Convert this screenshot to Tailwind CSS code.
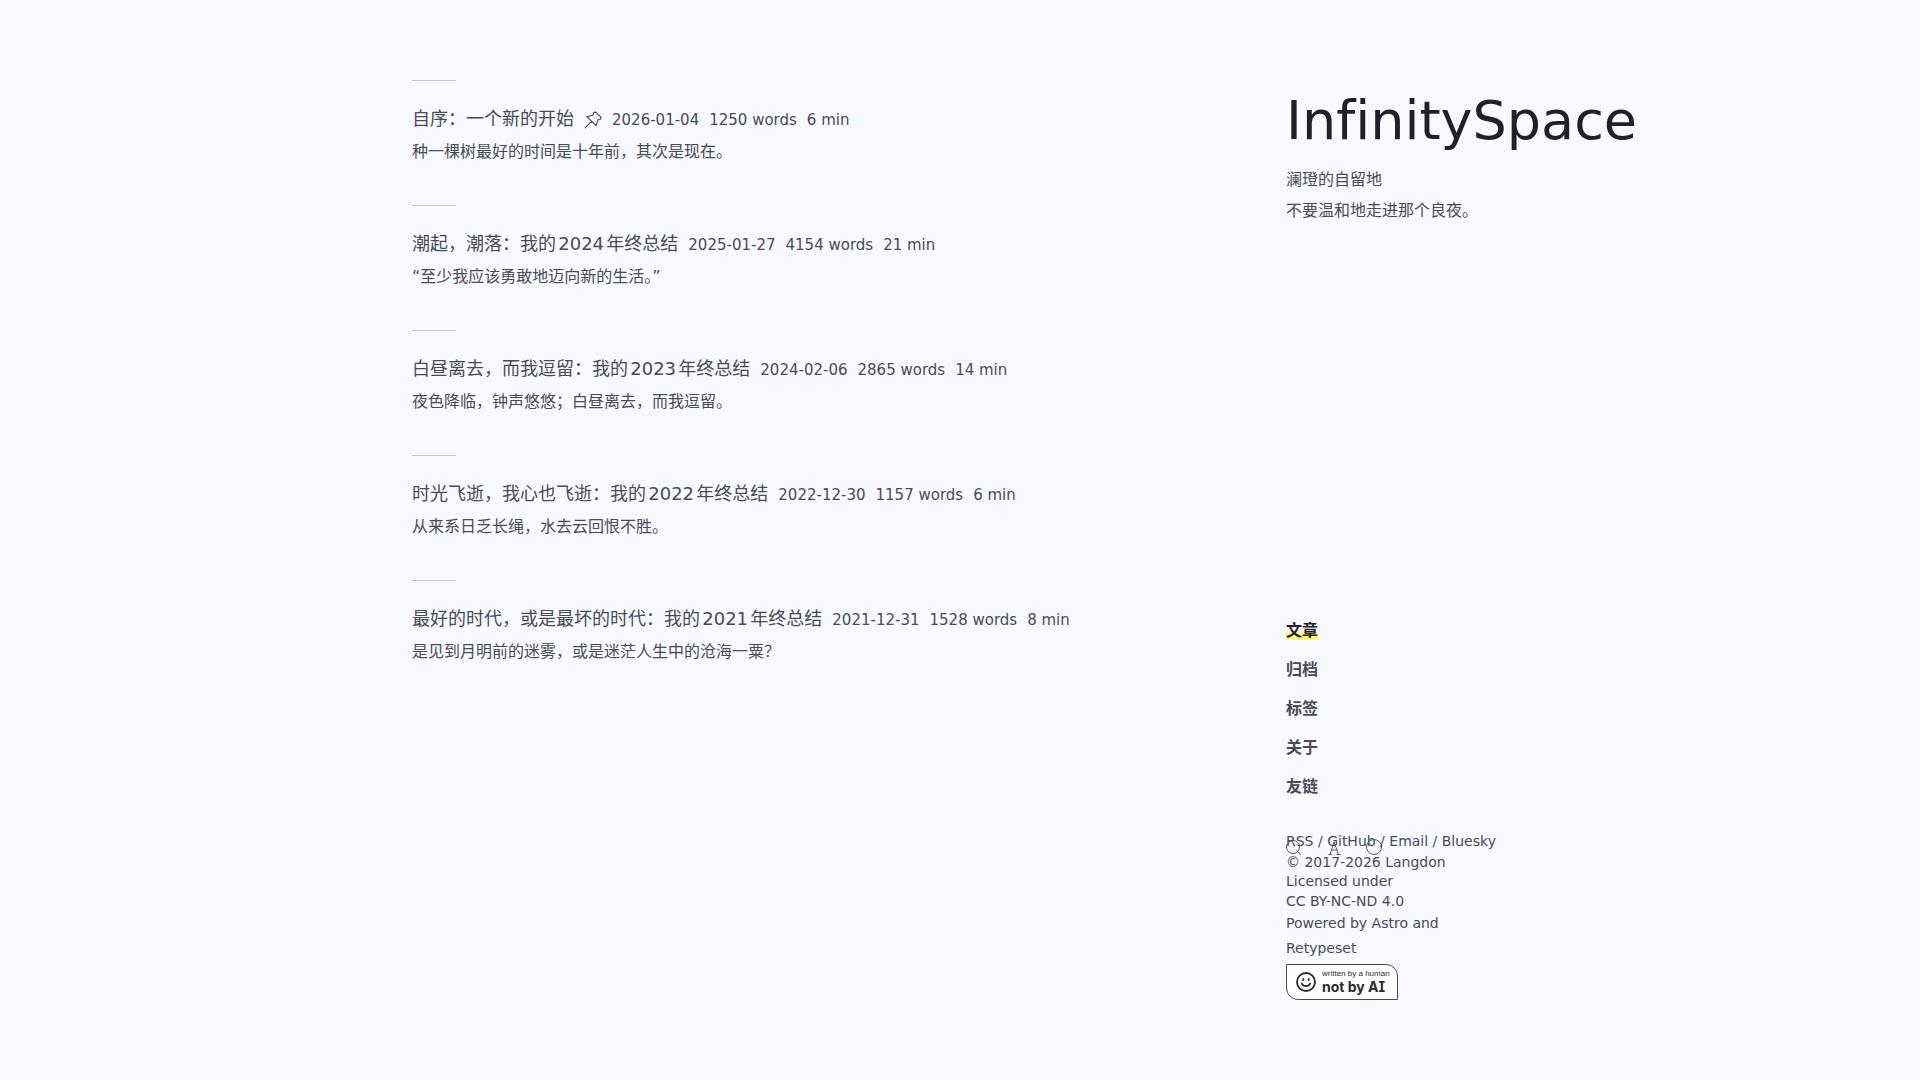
<!DOCTYPE html>
<html lang="zh-CN">
<head>
    <meta charset="UTF-8">
    <meta name="viewport" content="width=device-width, initial-scale=1.0">
    <title>InfinitySpace</title>
    <script src="https://cdn.jsdelivr.net/npm/@tailwindcss/browser@4"></script>
</head>
<body class="min-h-screen bg-[#f8f8ff] text-[#494b57] font-['DejaVu_Sans','Noto_Sans_CJK_SC',sans-serif] [text-autospace:normal] [font-variant-ligatures:none]">
    <div class="mx-auto flex min-h-screen w-full max-w-[1096px] justify-between pt-20">
        <!-- Posts -->
        <main class="w-[760px]">
            <ul>
                <li class="h-[125px]">
                    <div class="mb-6 h-px w-11 bg-[#c9cad4]"></div>
                    <div class="flex items-baseline gap-[10px]">
                        <h2 class="text-lg leading-7"><a href="#">自序：一个新的开始</a></h2>
                        <svg class="size-[18px] self-center" viewBox="0 0 16 16" fill="none" stroke="currentColor" stroke-width="1"><path d="M10.300 1 15.200 5.700l-.7 1.600-2.200.6-1.500 5.200-8.200-8 5.500-1.600.6-2.100zM6.600 9.200.8 15.200"/></svg>
                        <div class="flex gap-[10px] text-[15px] leading-7"><time>2026-01-04</time><span>1250 words</span><span>6 min</span></div>
                    </div>
                    <p class="mt-0.5 text-base leading-8">种一棵树最好的时间是十年前，其次是现在。</p>
                </li>
                <li class="h-[125px]">
                    <div class="mb-6 h-px w-11 bg-[#c9cad4]"></div>
                    <div class="flex items-baseline gap-[10px]">
                        <h2 class="text-lg leading-7"><a href="#">潮起，潮落：我的2024年终总结</a></h2>
                        <div class="flex gap-[10px] text-[15px] leading-7"><time>2025-01-27</time><span>4154 words</span><span>21 min</span></div>
                    </div>
                    <p class="mt-0.5 text-base leading-8">“至少我应该勇敢地迈向新的生活。”</p>
                </li>
                <li class="h-[125px]">
                    <div class="mb-6 h-px w-11 bg-[#c9cad4]"></div>
                    <div class="flex items-baseline gap-[10px]">
                        <h2 class="text-lg leading-7"><a href="#">白昼离去，而我逗留：我的2023年终总结</a></h2>
                        <div class="flex gap-[10px] text-[15px] leading-7"><time>2024-02-06</time><span>2865 words</span><span>14 min</span></div>
                    </div>
                    <p class="mt-0.5 text-base leading-8">夜色降临，钟声悠悠；白昼离去，而我逗留。</p>
                </li>
                <li class="h-[125px]">
                    <div class="mb-6 h-px w-11 bg-[#c9cad4]"></div>
                    <div class="flex items-baseline gap-[10px]">
                        <h2 class="text-lg leading-7"><a href="#">时光飞逝，我心也飞逝：我的2022年终总结</a></h2>
                        <div class="flex gap-[10px] text-[15px] leading-7"><time>2022-12-30</time><span>1157 words</span><span>6 min</span></div>
                    </div>
                    <p class="mt-0.5 text-base leading-8">从来系日乏长绳，水去云回恨不胜。</p>
                </li>
                <li class="h-[125px]">
                    <div class="mb-6 h-px w-11 bg-[#c9cad4]"></div>
                    <div class="flex items-baseline gap-[10px]">
                        <h2 class="text-lg leading-7"><a href="#">最好的时代，或是最坏的时代：我的2021年终总结</a></h2>
                        <div class="flex gap-[10px] text-[15px] leading-7"><time>2021-12-31</time><span>1528 words</span><span>8 min</span></div>
                    </div>
                    <p class="mt-0.5 text-base leading-8">是见到月明前的迷雾，或是迷茫人生中的沧海一粟？</p>
                </li>
            </ul>
        </main>

        <!-- Sidebar -->
        <aside class="flex w-[222px] flex-col pb-20">
            <header class="whitespace-nowrap">
                <h1 class="text-[54px] leading-[82px] text-[#1f2029]"><a href="#">InfinitySpace</a></h1>
                <p class="mt-0.5 text-base leading-[31px]">澜璒的自留地</p>
                <p class="text-base leading-[31px]">不要温和地走进那个良夜。</p>
            </header>

            <nav class="mt-auto flex flex-col items-start gap-[15px] text-base leading-6 font-bold">
                <a href="#" class="bg-[linear-gradient(transparent_13px,#fff97a_13px,#fff97a_21px,transparent_21px)] text-[#1f2029]">文章</a>
                <a href="#">归档</a>
                <a href="#">标签</a>
                <a href="#">关于</a>
                <a href="#">友链</a>
            </nav>

            <footer class="relative mt-8 text-sm">
                <!-- Search, language and theme toggles -->
                <div class="absolute top-2 left-0 flex gap-6">
                    <button type="button" aria-label="搜索"><svg class="size-4" viewBox="0 0 16 16" fill="none" stroke="currentColor" stroke-width=".9"><circle cx="7" cy="8" r="6.500"/><path d="m10.500 11.500 4.500 4.200"/></svg></button>
                    <button type="button" aria-label="语言"><svg class="size-4" viewBox="0 0 16 16" fill="none" stroke="currentColor" stroke-width=".9"><path d="M4 15.500 8 3l4.500 12.500M5.500 11h5.500M2.500 15.500h3.500M10.500 15.500h4"/></svg></button>
                    <button type="button" aria-label="主题"><svg class="size-4" viewBox="0 0 16 16" fill="none" stroke="currentColor" stroke-width=".9"><circle cx="8" cy="8" r="7.500"/></svg></button>
                </div>
                <p class="leading-[21px] whitespace-nowrap"><a href="#">RSS</a> / <a href="#">GitHub</a> / <a href="#">Email</a> / <a href="#">Bluesky</a></p>
                <p class="leading-[21px]">© 2017-2026 Langdon</p>
                <p class="leading-4">Licensed under</p>
                <p class="leading-6"><a href="#">CC BY-NC-ND 4.0</a></p>
                <p class="leading-[21px]">Powered by <a href="#">Astro</a> and</p>
                <p class="leading-7"><a href="#">Retypeset</a></p>
                <a href="#" class="mt-0.5 flex h-9 w-28 items-center gap-1 rounded-tr-xl rounded-bl-xl border border-[#494b57] bg-white pl-[9px] text-[#2b2b2f]">
                    <svg class="size-5 shrink-0" viewBox="0 0 20 20" fill="none" stroke="currentColor" stroke-width="1.800" stroke-linecap="round"><circle cx="10" cy="10" r="9"/><path d="M5.800 11.500c1.500 3.600 6.900 3.600 8.400 0M7.300 7v1M12.700 7v1"/></svg>
                    <span class="flex flex-col pl-0.5 whitespace-nowrap">
                        <span class="font-['Liberation_Sans',sans-serif] text-[8px] leading-[10px]">written by a human</span>
                        <span class="font-['Inter',sans-serif] text-[14px] leading-4 font-bold [font-feature-settings:'cv08']">not by AI</span>
                    </span>
                </a>
            </footer>
        </aside>
    </div>
</body>
</html>
